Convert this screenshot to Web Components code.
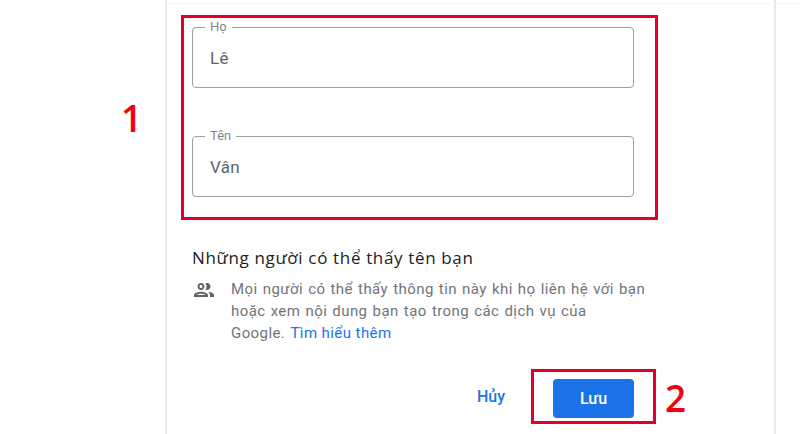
<!DOCTYPE html>
<html lang="vi">
<head>
<meta charset="utf-8">
<title>Tên</title>
<style>
  html, body { margin: 0; padding: 0; background: #fff; height: 434px; overflow: hidden; }
  body { font-family: Roboto, "Liberation Sans", sans-serif; }
</style>
</head>
<body>
<name-page>
  <name-card>
    <mark-box slot="fields" class="fields">
      <name-field label="Họ" value="Lê"></name-field>
      <name-field label="Tên" value="Vân"></name-field>
    </mark-box>
    <visibility-note slot="note"></visibility-note>
    <form-actions slot="actions"></form-actions>
  </name-card>
</name-page>

<script>
class NamePage extends HTMLElement {
  constructor() {
    super();
    this.attachShadow({ mode: 'open' }).innerHTML = `
      <style>
        :host { display: flex; height: 434px; padding-left: 165px; box-sizing: border-box; position: relative; }
        :host::before { content: ""; position: absolute; left: 165px; right: 0; top: 3px; height: 1px; background: #f6f6f6; }
        .num { position: absolute; color: #f4000f; font: 600 37px/40px "Open Sans", "Liberation Sans", sans-serif; }
        .one { left: 121px; top: 98px; }
        .two { left: 665px; top: 378px; }
      </style>
      <slot></slot>
      <span class="num one">1</span>
      <span class="num two">2</span>
    `;
  }
}

class NameCard extends HTMLElement {
  constructor() {
    super();
    this.attachShadow({ mode: 'open' }).innerHTML = `
      <style>
        :host {
          display: block; width: 611px; height: 434px; box-sizing: border-box;
          border-left: 2px solid #e8e8e8; border-right: 2px solid #e8e8e8;
          padding: 15px 0 0 14px;
        }
        .note { display: block; margin: 28px 0 0 11px; }
      </style>
      <slot name="fields"></slot>
      <div class="note"><slot name="note"></slot></div>
      <slot name="actions"></slot>
    `;
  }
}

class MarkBox extends HTMLElement {
  constructor() {
    super();
    this.attachShadow({ mode: 'open' }).innerHTML = `
      <style>
        :host {
          display: flex; flex-direction: column; gap: 48px; box-sizing: border-box;
          width: 477px; height: 205px; padding: 9px 21px 0 8px;
          border: 3px solid #e4002b;
        }
      </style>
      <slot></slot>
    `;
  }
}

class NameField extends HTMLElement {
  constructor() {
    super();
    this.attachShadow({ mode: 'open' }).innerHTML = `
      <style>
        :host {
          display: flex; align-items: center; position: relative; box-sizing: border-box;
          width: 442px; height: 61px; padding: 0 17px;
          border: 1px solid #9aa0a6; border-radius: 4px;
          color: #5f6368; font-size: 17px; letter-spacing: .3px;
        }
        .label {
          position: absolute; left: 12px; top: -8px; padding: 0 5px; background: #fff;
          font-size: 13px; line-height: 14px; color: #80868b; letter-spacing: 0;
        }
      </style>
      <span class="label"></span>
      <span class="value"></span>
    `;
    this.shadowRoot.querySelector('.label').textContent = this.getAttribute('label');
    this.shadowRoot.querySelector('.value').textContent = this.getAttribute('value');
  }
}

class VisibilityNote extends HTMLElement {
  constructor() {
    super();
    this.attachShadow({ mode: 'open' }).innerHTML = `
      <style>
        :host { display: block; width: 460px; }
        h2 {
          margin: 0 0 10px; font: 500 17px/20px "Open Sans", "Liberation Sans", sans-serif;
          letter-spacing: .65px; color: #202124; white-space: nowrap;
        }
        .row { display: flex; gap: 15px; }
        svg { width: 24px; height: 24px; flex: none; fill: #5f6368; }
        p { margin: 0; width: 425px; font-size: 15px; line-height: 22px; color: #70757a; letter-spacing: .42px; word-spacing: 1px; }
        a { color: #1a73e8; text-decoration: none; word-spacing: 0; }
      </style>
      <h2>Những người có thể thấy tên bạn</h2>
      <div class="row">
        <svg viewBox="0 0 24 24"><path d="M9 13.75c-2.34 0-7 1.17-7 3.5V19h14v-1.75c0-2.33-4.66-3.5-7-3.5zM4.34 17c.84-.58 2.87-1.25 4.66-1.25s3.82.67 4.66 1.25H4.34zM9 12c1.93 0 3.5-1.57 3.5-3.5S10.93 5 9 5 5.500 6.570 5.500 8.500 7.070 12 9 12zm0-5c.83 0 1.500.67 1.500 1.500S9.830 10 9 10s-1.500-.67-1.500-1.500S8.170 7 9 7zm7.040 6.810c1.160.84 1.960 1.960 1.960 3.440V19h4v-1.750c0-2.020-3.500-3.170-5.960-3.440zM15 12c1.930 0 3.500-1.570 3.500-3.500S16.930 5 15 5c-.54 0-1.040.13-1.500.35.630.89 1 1.980 1 3.150s-.37 2.260-1 3.150c.46.220.96.350 1.500.350z"/></svg>
        <p>Mọi người có thể thấy thông tin này khi họ liên hệ với bạn<br>hoặc xem nội dung bạn tạo trong các dịch vụ của<br>Google. <a href="#">Tìm hiểu thêm</a></p>
      </div>
    `;
  }
}

class FormActions extends HTMLElement {
  constructor() {
    super();
    this.attachShadow({ mode: 'open' }).innerHTML = `
      <style>
        :host { display: flex; align-items: center; margin: 25px 0 0 289px; font-size: 16px; font-weight: 500; }
        .cancel { color: #1a73e8; width: 54px; text-align: center; margin-left: -6px; margin-right: 6px; }
        .mark {
          display: flex; box-sizing: border-box; width: 125px; height: 55px;
          padding: 6px 0 0 18px; border: 3px solid #e4002b; margin-left: 7px;
        }
        button {
          width: 81px; height: 39px; border: 0; border-radius: 4px; background: #1a73e8; color: #fff;
          font: inherit; padding: 0; margin: 1px 0 0 1px;
        }
      </style>
      <span class="cancel">Hủy</span>
      <div class="mark"><button>Lưu</button></div>
    `;
  }
}

customElements.define('name-page', NamePage);
customElements.define('name-card', NameCard);
customElements.define('mark-box', MarkBox);
customElements.define('name-field', NameField);
customElements.define('visibility-note', VisibilityNote);
customElements.define('form-actions', FormActions);
</script>
</body>
</html>
